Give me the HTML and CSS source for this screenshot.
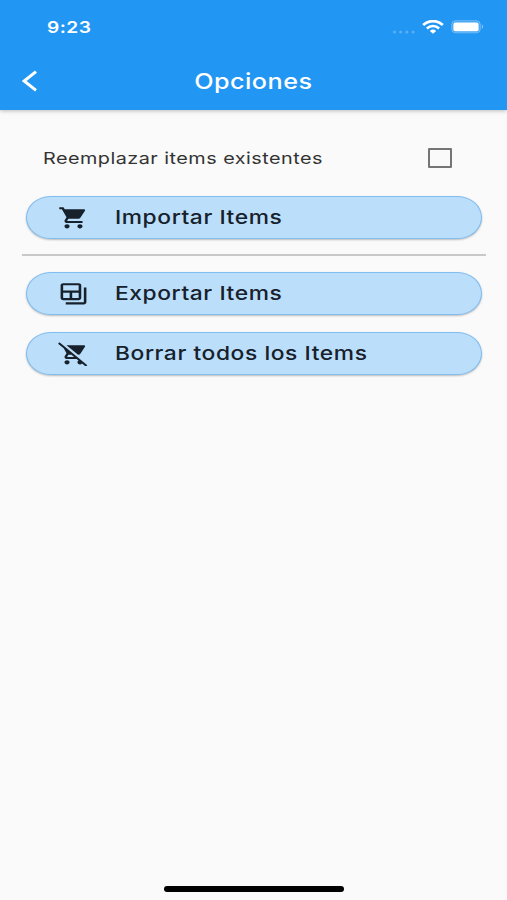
FILE: index.html
```html
<!DOCTYPE html>
<html lang="es">
<head>
    <meta charset="UTF-8">
    <meta name="viewport" content="width=device-width, initial-scale=1.0">
    <title>Opciones</title>
    <link rel="stylesheet" href="styles.css">
</head>
<body>
    <header>
        <div class="status-bar">
            <span class="time">9:23</span>
            <div class="status-icons">
                <svg class="signal" viewBox="0 0 24 4">
                    <circle cx="2.5" cy="2" r="1.5"/>
                    <circle cx="8.7" cy="2" r="1.5"/>
                    <circle cx="14.9" cy="2" r="1.5"/>
                    <circle cx="21.1" cy="2" r="1.5"/>
                </svg>
                <svg class="wifi" viewBox="0 0 22 14" preserveAspectRatio="none">
                    <path d="M1.2 5.1a14 14 0 0 1 19.6 0" stroke-width="2.8"/>
                    <path d="M4.9 8.5a8.8 8.8 0 0 1 12.2 0" stroke-width="2.6"/>
                    <path class="dot" d="M7.8 11a4.7 4.7 0 0 1 6.4 0L11 13.8z"/>
                </svg>
                <svg class="battery" viewBox="0 0 33 14">
                    <rect class="case" x=".7" y=".7" width="28.6" height="12.1" rx="3.8"/>
                    <rect class="level" x="2.4" y="2.4" width="25.2" height="8.8" rx="2"/>
                    <path class="tip" d="M30.8 4.6c1.7.6 1.7 3.8 0 4.4z"/>
                </svg>
            </div>
        </div>
        <nav>
            <a class="back" href="#" aria-label="Volver">
                <svg viewBox="0 0 16 22"><path d="M14 1.6 2.2 11 14 20.4"/></svg>
            </a>
            <h1><span class="wide">Opciones</span></h1>
        </nav>
    </header>

    <main>
        <label class="replace">
            <span class="wide">Reemplazar items existentes</span>
            <input type="checkbox">
        </label>

        <button class="option">
            <svg class="icon" viewBox="0 0 24 24" preserveAspectRatio="none"><path d="M7 18c-1.1 0-1.99.9-1.99 2S5.9 22 7 22s2-.9 2-2-.9-2-2-2zM1 2v2h2l3.6 7.59-1.35 2.45c-.16.28-.25.61-.25.96 0 1.1.9 2 2 2h12v-2H7.42c-.14 0-.25-.11-.25-.25l.03-.12.9-1.63h7.45c.75 0 1.41-.41 1.75-1.03l3.58-6.49c.08-.14.12-.31.12-.48 0-.55-.45-1-1-1H5.21l-.94-2H1zm16 16c-1.1 0-1.99.9-1.99 2s.89 2 1.99 2 2-.9 2-2-.9-2-2-2z"/></svg>
            <span class="wide">Importar Items</span>
        </button>

        <hr>

        <button class="option">
            <svg class="icon" viewBox="0 0 24 24" preserveAspectRatio="none"><path d="M20 6v14H6v2h14c1.1 0 2-.9 2-2V6h-2zM16 2H4c-1.1 0-2 .9-2 2v12c0 1.1.9 2 2 2h12c1.1 0 2-.9 2-2V4c0-1.1-.9-2-2-2zM9 16H4v-5h5v5zm7 0h-5v-5h5v5zm0-7H4V4h12v5z"/></svg>
            <span class="wide">Exportar Items</span>
        </button>

        <button class="option">
            <svg class="icon" viewBox="0 0 24 24" preserveAspectRatio="none"><path d="M22.73 22.73L2.77 2.77 2 2l-.73-.73L0 2.54l4.39 4.39 2.21 4.66-1.35 2.45c-.16.28-.25.61-.25.96 0 1.1.9 2 2 2h7.46l1.38 1.38c-.5.36-.83.95-.83 1.62 0 1.1.89 2 1.99 2 .67 0 1.26-.33 1.62-.84L21.46 24l1.27-1.27zM7.42 15c-.14 0-.25-.11-.25-.25l.03-.12.9-1.63h2.36l2 2H7.42zm8.13-2c.75 0 1.41-.41 1.75-1.03l3.58-6.49c.08-.14.12-.31.12-.48 0-.55-.45-1-1-1H6.54l9.01 9zM7 18c-1.1 0-1.99.9-1.99 2S5.9 22 7 22s2-.9 2-2-.9-2-2-2z"/></svg>
            <span class="wide">Borrar todos los Items</span>
        </button>
    </main>

    <footer>
        <div class="home-indicator"></div>
    </footer>
</body>
</html>
```

FILE: styles.css
```css
* {
    margin: 0;
    padding: 0;
    box-sizing: border-box;
}

body {
    display: flex;
    flex-direction: column;
    height: 100vh;
    overflow: hidden;
    font-family: Inter, "Liberation Sans", sans-serif;
    background-color: #fafafa;
    color: #333;
}

header {
    height: 110px;
    background-color: #2196f3;
    color: #fff;
    box-shadow: 0 1px 4px rgba(0, 0, 0, 0.25);
}

.wide {
    display: inline-block;
    white-space: nowrap;
    letter-spacing: 0.4px;
    transform: scaleX(1.2);
    transform-origin: left center;
}

.status-bar {
    display: flex;
    justify-content: space-between;
    align-items: center;
    height: 54px;
    padding: 0 23px 0 47px;
}

.time {
    font-size: 16px;
    font-weight: 600;
    letter-spacing: 0.4px;
    transform: scaleX(1.2);
    transform-origin: left center;
}

.status-icons {
    display: flex;
    align-items: center;
}

.signal {
    width: 24px;
    height: 4px;
    margin: 9px 6px 0 0;
    fill: #fff;
    opacity: 0.25;
}

.wifi {
    width: 22px;
    height: 14px;
    margin-right: 7px;
    fill: none;
    stroke: #fff;
}

.wifi .dot {
    fill: #fff;
    stroke: none;
}

.battery {
    width: 33px;
    height: 14px;
    fill: #fff;
}

.battery .case {
    fill: #fff;
    fill-opacity: 0.15;
    stroke: #fff;
    stroke-opacity: 0.3;
}

.battery .tip {
    opacity: 0.45;
}

nav {
    display: grid;
    grid-template-columns: 60px 1fr 60px;
    align-items: center;
    height: 54px;
}

.back {
    padding-left: 22px;
}

.back svg {
    display: block;
    width: 16px;
    height: 22px;
    fill: none;
    stroke: #fff;
    stroke-width: 3;
}

h1 {
    font-size: 21px;
    font-weight: 500;
    text-align: center;
}

h1 .wide {
    transform-origin: center;
}

main {
    flex: 1;
    padding: 27px 21px 0 22px;
}

.replace {
    display: flex;
    justify-content: space-between;
    align-items: center;
    height: 41px;
    padding: 0 34px 0 21px;
    font-size: 16.5px;
}

.replace input {
    appearance: none;
    width: 24px;
    height: 20px;
    border: 2px solid #757575;
    border-radius: 1px;
}

.option {
    display: flex;
    align-items: center;
    width: 456px;
    height: 43px;
    margin: 18px 0 0 4px;
    padding-left: 31px;
    border: 1px solid #80bdf0;
    border-radius: 25px / 22px;
    background-color: #bbdefb;
    box-shadow: 0 1px 2px rgba(0, 0, 0, 0.25);
    color: #17212b;
    font-family: inherit;
    font-size: 19px;
    font-weight: 500;
    cursor: pointer;
}

.option .wide {
    letter-spacing: 0.48px;
}

.option + .option {
    margin-top: 16.8px;
}

.icon {
    width: 31px;
    height: 25.5px;
    margin-right: 26px;
    fill: currentColor;
}

hr {
    height: 2px;
    margin-top: 15.4px;
    border: none;
    background-color: #c8c8c8;
}

hr + .option {
    margin-top: 16px;
}

footer {
    display: flex;
    justify-content: center;
    padding-bottom: 8px;
}

.home-indicator {
    width: 180px;
    height: 6px;
    border-radius: 3px;
    background-color: #000;
}
```
